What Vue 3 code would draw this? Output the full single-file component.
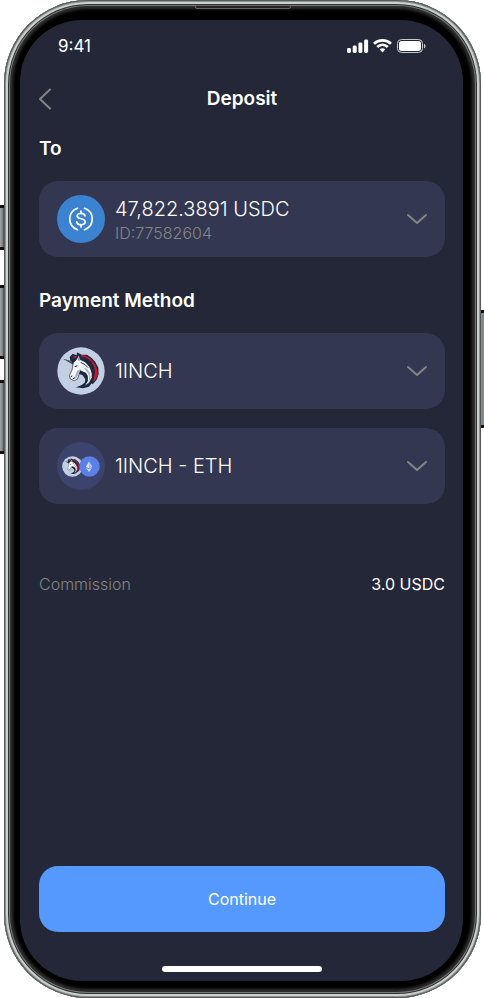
<template>
  <div class="phone">
    <!-- side buttons -->
    <span class="side-key mute"></span>
    <span class="side-key volume-up"></span>
    <span class="side-key volume-down"></span>
    <span class="side-key power"></span>
    <span class="speaker"></span>

    <!-- shared artwork -->
    <svg class="defs" aria-hidden="true">
      <symbol id="unicorn" viewBox="0 0 144 144">
        <circle cx="72" cy="72" r="71" fill="#c3d0e4" />
        <!-- mane -->
        <path
          d="M38 30 47 20 59 25 60 16 74 23 90 23 104 33 115 45 124 62 125 82 119 98 107 112 104 109 96 119 78 124 56 121 79 113 88 101 60 60 44 50 18 35 40 42Z"
          fill="#1d2940"
        />
        <path
          d="M72 26 91 31 105 43 114 60 116 78 111 101 120 84 119 70 113 54 103 41 92 32 80 27Z"
          fill="#d4142a"
          stroke="#d4142a"
          stroke-width="4"
        />
        <path d="M45 29 58 27 60 30 52 34Z" fill="#d4142a" />
        <path d="M44 43 18 35 45 49Z" fill="#53627d" />
        <!-- head and neck -->
        <path
          d="M49 47 58 38 65 25 70 38 84 44 97 58 105 75 105 92 96 108 83 117 91 102 92 88 86 78 74 74 67 79 62 96 52 101 40 96 37 86 45 69Z"
          fill="#f5f8fb"
          stroke="#1d2940"
          stroke-width="2"
        />
        <path d="M74 59 83 65 90 75 97 87 95 107 101 91 98 76 90 65Z" fill="#a9b5c9" />
        <path d="M61 73 71 70 83 77 91 90 92 101 82 115 66 120 83 107 86 94 79 85 68 82Z" fill="#1d2940" />
        <path d="M60 72 72 66 67 77 60 90 53 96 54 86Z" fill="#a9b5c9" />
        <path d="M65 26 62 39 67 43 69 37Z" fill="#8a98b0" />
        <path
          d="M76 38 91 48 101 62 106 79M71 46 84 53 93 62"
          fill="none"
          stroke="#1d2940"
          stroke-width="3"
        />
        <path d="M52 58 62 54 57 61Z" fill="#1d2940" />
        <path d="M41 89 46 87M47 96 54 92" stroke="#1d2940" stroke-width="3" />
      </symbol>
    </svg>

    <main class="screen">
      <div class="status-bar">
        <span>9:41</span>
        <svg class="status-icons" viewBox="0 0 79 14" fill="#fff" aria-hidden="true">
          <rect x="0" y="9" width="4" height="5" rx="1.4" />
          <rect x="5.7" y="6.5" width="4" height="7.5" rx="1.4" />
          <rect x="11.4" y="3.4" width="4" height="10.6" rx="1.4" />
          <rect x="17.1" y="0.4" width="4" height="13.6" rx="1.4" />
          <path
            d="M27 4.7C31.5 0.3 39.5 0.3 44 4.7M30.2 8C33.3 5.1 37.7 5.1 40.8 8"
            fill="none"
            stroke="#fff"
            stroke-width="2.7"
          />
          <path d="M32.6 10.3C34.3 8.9 36.7 8.9 38.4 10.3L35.5 13.4Z" />
          <rect x="50.5" y="0.5" width="25" height="13" rx="4" fill="none" stroke="#c9cacf" />
          <rect x="52" y="2" width="22" height="10" rx="2.5" />
          <path d="M77 4.7C79 5.5 79 8.5 77 9.3Z" fill="#c9cacf" />
        </svg>
      </div>

      <header class="header">
        <button class="back-btn" type="button" aria-label="Back">
          <svg viewBox="0 0 14 22">
            <path d="M11 1.5 1 11 11 20.5" />
          </svg>
        </button>
        <h1>Deposit</h1>
      </header>

      <form class="form" @submit.prevent>
        <label class="section-title" for="account">To</label>
        <div class="card">
          <svg class="coin" viewBox="0 0 48 48" aria-hidden="true">
            <circle cx="24" cy="24" r="24" fill="#3b82d0" />
            <g fill="none" stroke="#fff" stroke-width="1.7" stroke-linecap="round">
              <path d="M20.5 13.3C10.2 17 10.2 31 20.5 34.7M27.5 13.3C37.8 17 37.8 31 27.5 34.7" />
              <path
                d="M28 20.8C27.7 17.7 20.2 17.2 20.2 20.9C20.2 24.7 28.2 22.7 28.2 26.9C28.2 30.9 20 30.5 19.8 26.9M24 16V18.2M24 29.7V32"
              />
            </g>
          </svg>
          <div class="card-body">
            <select id="account" v-model="account">
              <option>47,822.3891 USDC</option>
            </select>
            <span class="card-note">ID:77582604</span>
          </div>
          <svg class="chevron" viewBox="0 0 20 12" aria-hidden="true">
            <path d="M1 2 10 10 19 2" />
          </svg>
        </div>

        <label class="section-title" for="coin">Payment Method</label>
        <div class="card">
          <svg class="coin" aria-hidden="true"><use href="#unicorn" /></svg>
          <div class="card-body">
            <select id="coin" v-model="coin">
              <option>1INCH</option>
            </select>
          </div>
          <svg class="chevron" viewBox="0 0 20 12" aria-hidden="true">
            <path d="M1 2 10 10 19 2" />
          </svg>
        </div>

        <div class="card">
          <svg class="coin" viewBox="0 0 48 48" aria-hidden="true">
            <circle cx="24" cy="24" r="24" fill="#3c436d" />
            <use href="#unicorn" x="5" y="14" width="21" height="21" />
            <circle cx="32.5" cy="24.5" r="10.2" fill="#5b80e8" />
            <path d="M32 19.5 28.8 24.8 32 26.6 35.2 24.8Z" fill="#d5e1fc" />
            <path d="M32 19.5V26.6L35.2 24.8Z" fill="#a8c0f7" />
            <path d="M28.9 25.7 32 30 35.1 25.7 32 27.5Z" fill="#d5e1fc" />
          </svg>
          <div class="card-body">
            <select v-model="network" aria-label="Network">
              <option>1INCH - ETH</option>
            </select>
          </div>
          <svg class="chevron" viewBox="0 0 20 12" aria-hidden="true">
            <path d="M1 2 10 10 19 2" />
          </svg>
        </div>

        <div class="commission">
          <span class="commission-label">Commission</span>
          <span>3.0 USDC</span>
        </div>

        <button class="continue-btn" type="submit">Continue</button>
      </form>

      <div class="home-indicator"></div>
    </main>
  </div>
</template>

<script setup>
import { ref } from 'vue'

const account = ref('47,822.3891 USDC')
const coin = ref('1INCH')
const network = ref('1INCH - ETH')
</script>

<style>
body {
  margin: 0;
  background: #fff;
}
</style>

<style scoped>
* {
  box-sizing: border-box;
}

.phone {
  position: relative;
  display: flex;
  min-height: 100vh;
  margin: 0 3px 0 4px;
  padding: 20px 18px 17px 16px;
  border-radius: 84px;
  background: #000;
  font-family: Inter, 'Liberation Sans', sans-serif;
  color: #fff;
  /* metal rim, from the outer edge inwards */
  box-shadow:
    inset 0 0 0 1px #555957,
    inset 0 0 0 2px #8f9391,
    inset 0 0 0 4px #cbd1ce,
    inset 0 0 0 5px #303231,
    inset 0 0 0 6px #777a79,
    inset 0 0 3px 9px #303030;
}

.defs {
  position: absolute;
  width: 0;
  height: 0;
}

/* hardware keys on the rim */
.side-key {
  position: absolute;
  left: -4px;
  width: 4px;
  border: solid #111;
  border-width: 3px 0;
  background: linear-gradient(90deg, #a3a6a8, #77797b 75%, #333);
}

.mute {
  top: 205px;
  height: 45px;
}

.volume-up {
  top: 285px;
  height: 74px;
}

.volume-down {
  top: 380px;
  height: 74px;
}

.power {
  top: 310px;
  right: -3px;
  left: auto;
  width: 3px;
  height: 118px;
  background: #84888b;
}

.speaker {
  position: absolute;
  top: 5px;
  left: calc(50% - 48px);
  width: 96px;
  height: 4px;
  border: 1px solid #666;
  border-radius: 2px;
  background: #222;
}

.screen {
  display: flex;
  flex: 1;
  flex-direction: column;
  padding: 14px 18px 9px 19px;
  border-radius: 62px;
  background: #242737;
}

.status-bar {
  display: flex;
  align-items: center;
  justify-content: space-between;
  height: 24px;
  padding: 0 19px;
  font-size: 17px;
  line-height: 24px;
}

.status-icons {
  width: 79px;
  height: 14px;
}

.header {
  display: grid;
  grid-template-columns: 24px 1fr 24px;
  align-items: center;
  height: 28px;
  margin-top: 27px;
}

.header h1 {
  margin: 0;
  font-size: 19px;
  font-weight: 600;
  line-height: 28px;
  text-align: center;
}

.back-btn {
  display: flex;
  padding: 0;
  border: none;
  background: transparent;
  cursor: pointer;
}

.back-btn svg {
  width: 14px;
  height: 22px;
}

.back-btn path,
.chevron path {
  fill: none;
  stroke: #838583;
  stroke-width: 2;
  stroke-linecap: round;
  stroke-linejoin: round;
}

.form {
  display: flex;
  flex: 1;
  flex-direction: column;
}

.section-title {
  margin: 22px 0 18px;
  font-size: 19px;
  font-weight: 600;
  line-height: 28px;
}

.card {
  display: flex;
  align-items: center;
  gap: 10px;
  height: 76px;
  flex-shrink: 0;
  padding: 0 18px;
  border-radius: 19px;
  background: #343751;
}

.card + .section-title {
  margin-top: 30px;
}

.card + .card {
  margin-top: 19px;
}

.coin {
  flex-shrink: 0;
  width: 48px;
  height: 48px;
}

.card-body {
  display: flex;
  flex: 1;
  flex-direction: column;
  min-width: 0;
}

.card select {
  width: 100%;
  height: 28px;
  padding: 0;
  border: none;
  appearance: none;
  background: transparent;
  font-family: inherit;
  font-size: 20px;
  font-weight: 300;
  line-height: 28px;
  color: #fff;
  cursor: pointer;
}

.card option {
  background: #343751;
}

.card-note {
  font-size: 16px;
  font-weight: 300;
  line-height: 20px;
  color: #838583;
}

.chevron {
  flex-shrink: 0;
  width: 20px;
  height: 12px;
}

.commission {
  display: flex;
  justify-content: space-between;
  margin-top: 68px;
  font-size: 16px;
  line-height: 24px;
}

.commission-label {
  font-weight: 300;
  color: #838583;
}

.continue-btn {
  height: 66px;
  margin-top: auto;
  border: none;
  border-radius: 19px;
  background: #5599ff;
  font-family: inherit;
  font-size: 16px;
  color: #fff;
  cursor: pointer;
}

.home-indicator {
  width: 160px;
  height: 6px;
  margin: 34px auto 0;
  border-radius: 3px;
  background: #fff;
}
</style>
